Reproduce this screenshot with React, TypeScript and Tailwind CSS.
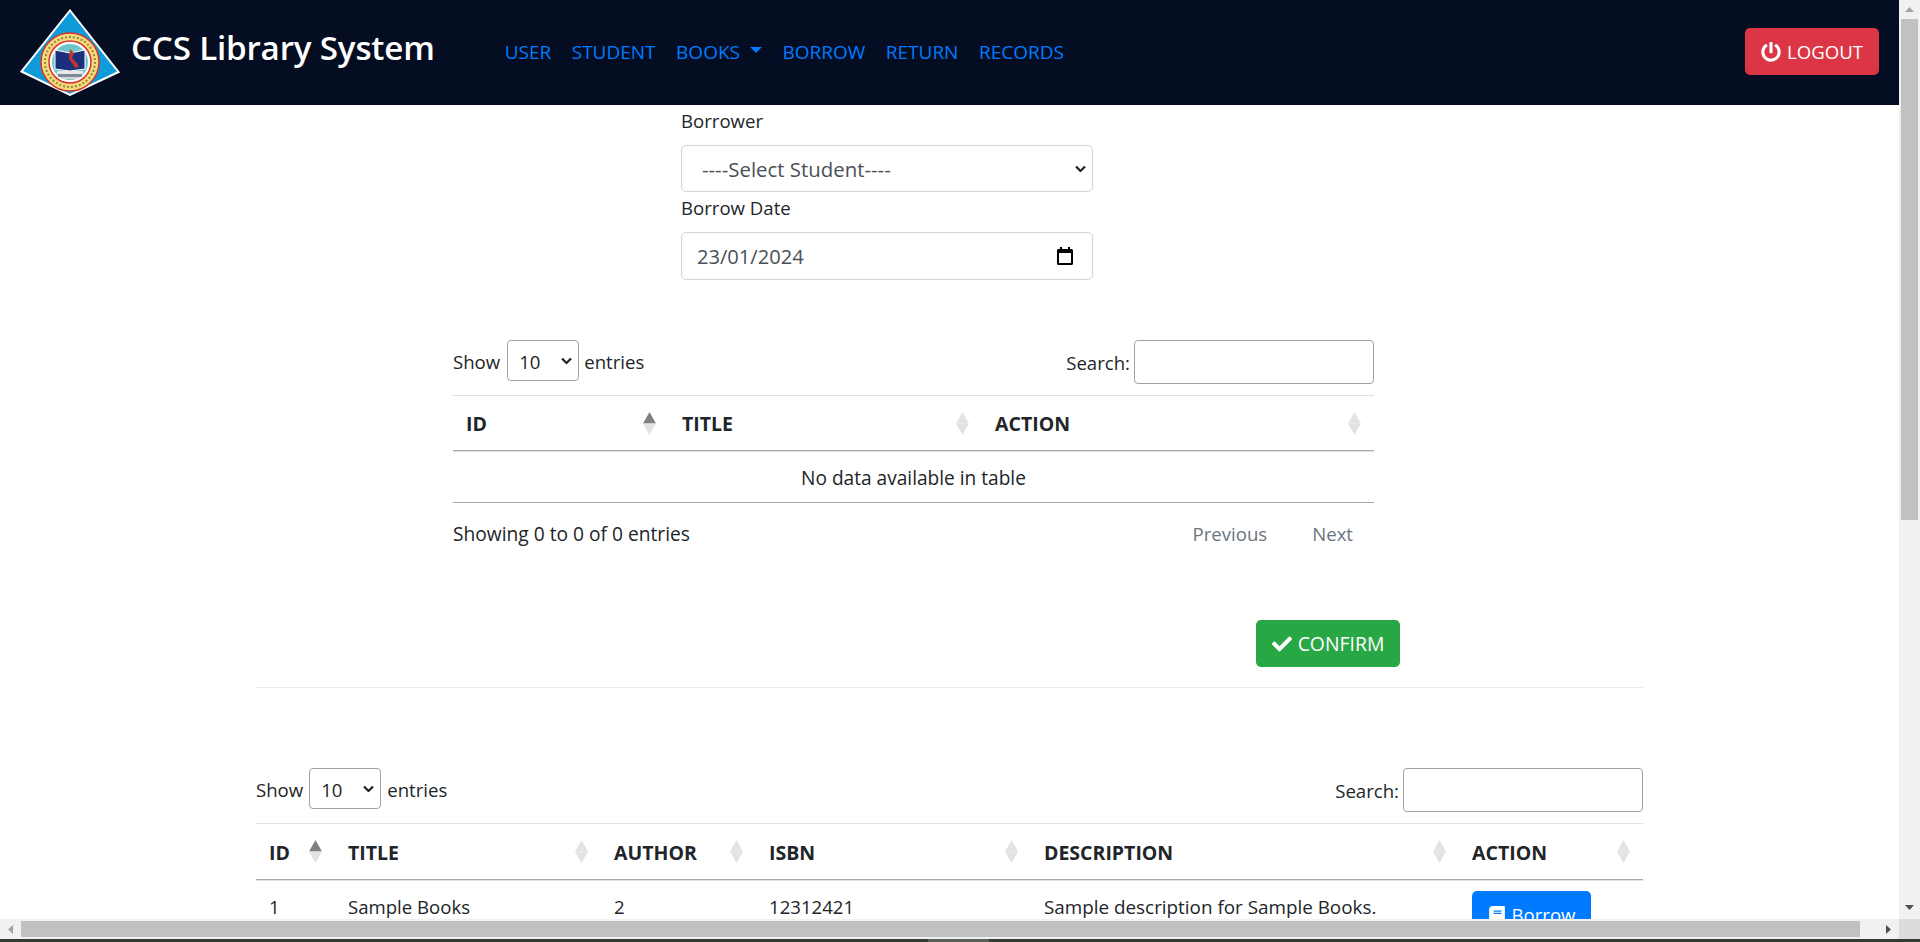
import { FaBook, FaCheck, FaPowerOff } from "react-icons/fa";

const navLinks = ["USER", "STUDENT", "BOOKS", "BORROW", "RETURN", "RECORDS"];

function Logo() {
  return (
    <svg width="100" height="88" viewBox="0 0 100 88" className="shrink-0">
      <polygon points="50,1.5 98.5,63 50,86 1.5,62.5" fill="#0f9bd9" stroke="#ffffff" strokeWidth="2" />
      <circle cx="50" cy="53" r="29" fill="#f5dc7a" stroke="#d8342e" strokeWidth="1.5" />
      <circle cx="50" cy="53" r="25" fill="none" stroke="#6a5a3a" strokeWidth="2" strokeDasharray="2 2" opacity="0.7" />
      <circle cx="50" cy="53" r="21" fill="#ffffff" stroke="#d8342e" strokeWidth="1.5" />
      <circle cx="50" cy="53" r="18" fill="#6cc6cc" />
      <polygon points="35,41 50,44 65,41 65,60 50,62 35,60" fill="#1c2f7c" stroke="#ffffff" strokeWidth="1" />
      <path d="M50 40 l4 4 -2 5 5 5 2 4 -4 1 -3 -5 -3 -4 z" fill="#c5352e" />
      <rect x="37" y="62" width="26" height="3" fill="#e8e8e8" />
      <rect x="38" y="65" width="24" height="3" fill="#7f8a99" />
      <rect x="41" y="68" width="18" height="2" fill="#d7d7d7" />
    </svg>
  );
}

function SortIcon({ active = false }: { active?: boolean }) {
  return (
    <svg width="13" height="23" viewBox="0 0 13 23" className="shrink-0">
      <polygon points="6.5,0 13,11.5 0,11.5" fill={active ? "#808080" : "#e2e3e3"} />
      <polygon points="0,11.500 13,11.500 6.500,23" fill="#e2e3e3" />
    </svg>
  );
}

function SelectBox({ label, className }: { label: string; className: string }) {
  return (
    <div className="relative">
      <select className={`appearance-none bg-white ${className}`}>
        <option>{label}</option>
      </select>
      <svg
        width="11"
        height="7"
        viewBox="0 0 11 7"
        className="pointer-events-none absolute top-1/2 right-[7px] -translate-y-1/2"
      >
        <path d="M1 1l4.500 4.500L10 1" fill="none" stroke="#222222" strokeWidth="2.2" />
      </svg>
    </div>
  );
}

function EntriesRow({ selectMargin, searchWidth }: { selectMargin: string; searchWidth: string }) {
  return (
    <div className="flex h-[55px] justify-between">
      <div className="flex h-[41px] items-center">
        <span className="mt-[2px]">Show</span>
        <div className={selectMargin}>
          <SelectBox label="10" className="block h-[41px] w-[72px] rounded-[4px] border border-[#a3a3a3] pt-[2px] pl-[11px]" />
        </div>
        <span className="mt-[2px]">entries</span>
      </div>
      <div className="flex h-[44px] items-center">
        <span className="mt-[2px] mr-[4px]">Search:</span>
        <input className={`h-[44px] rounded-[4px] border border-[#a3a3a3] bg-white ${searchWidth}`} />
      </div>
    </div>
  );
}

function HeadCell({ label, width, height, active }: { label: string; width: string; height: string; active?: boolean }) {
  return (
    <th className={`border-y border-t-[#dee2e6] border-b-[#a9a9a9] p-0 ${width} ${height}`}>
      <div className="flex items-center justify-between pr-[13px] pl-[13px] text-[19.5px] font-bold">
        <span className="mt-[2px]">{label}</span>
        <SortIcon active={active} />
      </div>
    </th>
  );
}

function ScrollTriangle({ dir }: { dir: "up" | "down" | "left" | "right" }) {
  const points = {
    up: "0,5 9,5 4.500,0",
    down: "0,0 9,0 4.500,5",
    left: "5,0 5,9 0,4.500",
    right: "0,0 0,9 5,4.500",
  }[dir];
  const vertical = dir === "up" || dir === "down";
  const fill = dir === "up" || dir === "left" ? "#a3a3a3" : "#505050";
  return (
    <svg viewBox={vertical ? "0 0 9 5" : "0 0 5 9"} className={vertical ? "h-[5px] w-[9px]" : "h-[9px] w-[5px]"}>
      <polygon points={points} fill={fill} />
    </svg>
  );
}

export default function App() {
  return (
    <div className="flex h-screen w-screen flex-col overflow-hidden bg-white font-['Open_Sans',sans-serif] text-[18.6px] leading-[30px] text-[#212529]">
      <div className="flex min-h-0 flex-1">
        <main className="min-w-0 flex-1 overflow-hidden">
          <header className="flex h-[105px] items-center bg-[#040d21] pr-[20px] pl-[20px]">
            <Logo />
            <a className="mb-[10px] ml-[11px] text-[33.200px] font-semibold tracking-[-0.2px] whitespace-nowrap text-white">
              CCS Library System
            </a>
            <nav className="mb-[2px] ml-[70px] flex items-center gap-[20.500px] text-[19px] text-[#007bff] uppercase">
              {navLinks.map((link) => (
                <a key={link} className="flex items-center">
                  {link}
                  {link === "BOOKS" && (
                    <span className="mt-[-3px] ml-[10px] h-0 w-0 border-x-[6px] border-t-[6px] border-x-transparent border-t-[#007bff]" />
                  )}
                </a>
              ))}
            </nav>
            <button className="mb-[2px] ml-auto flex h-[47px] w-[134px] items-center justify-center rounded-[5px] bg-[#dc3545] text-white">
              <FaPowerOff className="mr-[6px] h-[20px] w-[20px]" />
              LOGOUT
            </button>
          </header>

          <section className="ml-[681px] w-[412px]">
            <label className="block pt-[1px] pb-[9px]">Borrower</label>
            <SelectBox
              label="----Select Student----"
              className="block h-[47px] w-full rounded-[5px] border border-[#ced4da] pl-[20px] text-[20.400px] text-[#495057]"
            />
            <label className="mt-[1px] block pb-[9px]">Borrow Date</label>
            <div className="flex h-[48px] items-center justify-between rounded-[5px] border border-[#ced4da] pr-[19px] pl-[15px] text-[20.100px] text-[#495057]">
              <span className="mt-[2px]">23/01/2024</span>
              <svg width="16" height="18" viewBox="0 0 16 18">
                <path d="M3 0h2v2h6V0h2v2h1.500A1.500 1.500 0 0 1 16 3.500v13a1.500 1.500 0 0 1-1.500 1.500h-13A1.500 1.500 0 0 1 0 16.500v-13A1.500 1.500 0 0 1 1.500 2H3zM2 6v10h12V6z" fill="#000000" />
              </svg>
            </div>
          </section>

          <section className="mt-[60px] ml-[453px] w-[921px]">
            <EntriesRow selectMargin="mr-[5px] ml-[7px]" searchWidth="w-[240px]" />
            <table className="w-full table-fixed border-separate border-spacing-0">
              <thead>
                <tr>
                  <HeadCell label="ID" width="w-[216px]" height="h-[56px]" active />
                  <HeadCell label="TITLE" width="w-[313px]" height="h-[56px]" />
                  <HeadCell label="ACTION" width="w-[392px]" height="h-[56px]" />
                </tr>
              </thead>
              <tbody>
                <tr>
                  <td colSpan={3} className="h-[52px] border-t border-b border-t-[#dee2e6] border-b-[#a9a9a9] p-0 pt-[2px] text-center text-[19.100px]">
                    No data available in table
                  </td>
                </tr>
              </tbody>
            </table>
            <div className="mt-[16px] flex items-center justify-between">
              <span className="text-[19.200px]">Showing 0 to 0 of 0 entries</span>
              <div className="flex gap-[45px] pr-[21px] text-[#6c757d]">
                <span>Previous</span>
                <span>Next</span>
              </div>
            </div>
          </section>

          <div className="mt-[71px] ml-[1256px] flex h-[47px] w-[144px] items-center justify-center rounded-[5px] bg-[#28a745] pt-[1px] text-[19.400px] text-white">
            <FaCheck className="mr-[6px] h-[20px] w-[20px]" />
            CONFIRM
          </div>

          <hr className="mt-[20px] ml-[256px] w-[1387px] border-t border-[#e9ecef]" />

          <section className="mt-[80px] ml-[256px] w-[1387px]">
            <EntriesRow selectMargin="mx-[6px]" searchWidth="w-[240px]" />
            <table className="w-full table-fixed border-separate border-spacing-0">
              <thead>
                <tr>
                  <HeadCell label="ID" width="w-[79px]" height="h-[57px]" active />
                  <HeadCell label="TITLE" width="w-[266px]" height="h-[57px]" />
                  <HeadCell label="AUTHOR" width="w-[155px]" height="h-[57px]" />
                  <HeadCell label="ISBN" width="w-[275px]" height="h-[57px]" />
                  <HeadCell label="DESCRIPTION" width="w-[428px]" height="h-[57px]" />
                  <HeadCell label="ACTION" width="w-[184px]" height="h-[57px]" />
                </tr>
              </thead>
              <tbody>
                <tr className="[&>td]:h-[70px] [&>td]:border-t [&>td]:border-t-[#dee2e6] [&>td]:px-[13px] [&>td]:py-0 [&>td]:align-top">
                  <td><div className="pt-[11px]">1</div></td>
                  <td><div className="pt-[11px]">Sample Books</div></td>
                  <td><div className="pt-[11px]">2</div></td>
                  <td><div className="pt-[11px]">12312421</div></td>
                  <td><div className="pt-[11px] text-[18.850px]">Sample description for Sample Books.</div></td>
                  <td>
                    <button className="mt-[10px] flex h-[47px] w-[119px] items-center justify-center rounded-[5px] bg-[#007bff] text-white">
                      <FaBook className="mr-[6px] h-[18px] w-[18px]" />
                      Borrow
                    </button>
                  </td>
                </tr>
              </tbody>
            </table>
          </section>
        </main>

        <aside className="flex w-[21px] shrink-0 flex-col items-center bg-[#f1f1f1]">
          <div className="flex h-[19px] shrink-0 items-center justify-center">
            <ScrollTriangle dir="up" />
          </div>
          <div className="h-[501px] w-[17px] bg-[#c1c1c1]" />
          <div className="flex flex-1 items-end justify-center pb-[9px]">
            <ScrollTriangle dir="down" />
          </div>
        </aside>
      </div>

      <div className="flex h-[20px] shrink-0 bg-[#f1f1f1]">
        <div className="flex w-[21px] shrink-0 items-center justify-center">
          <ScrollTriangle dir="left" />
        </div>
        <div className="my-[2px] w-[1839px] bg-[#c1c1c1]" />
        <div className="flex w-[39px] items-center justify-end pr-[8px]">
          <ScrollTriangle dir="right" />
        </div>
        <div className="w-[21px] shrink-0 bg-[#dcdcdc]" />
      </div>
      <div className="flex h-[3px] shrink-0 bg-[#343c30]">
        <div className="w-[928px]" />
        <div className="w-[61px] bg-[#5b6157]" />
      </div>
    </div>
  );
}
